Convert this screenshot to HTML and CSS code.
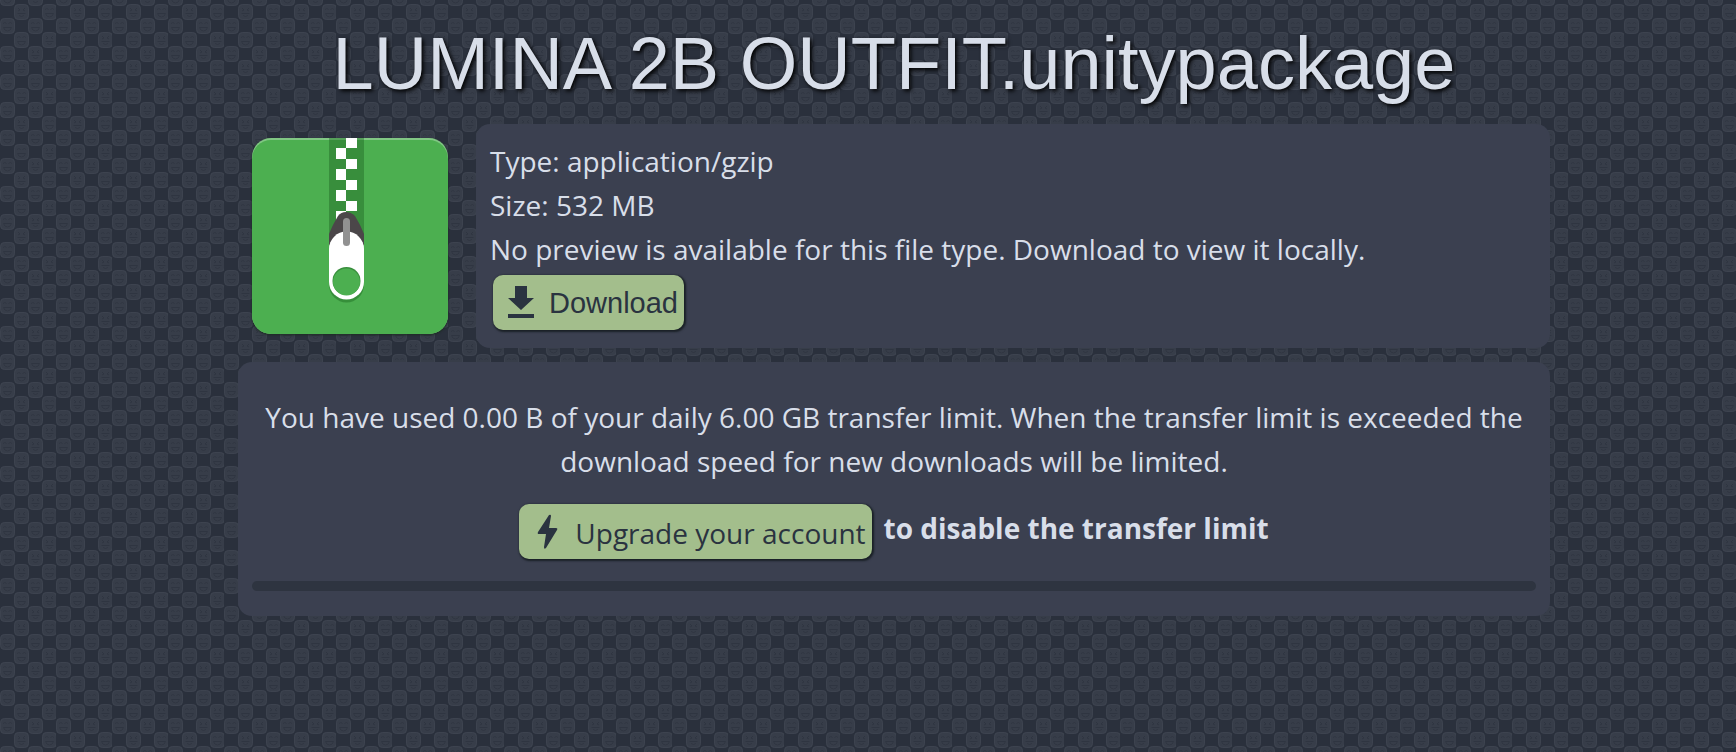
FILE: index.html
```html
<!DOCTYPE html>
<html lang="en">
<head>
<meta charset="utf-8">
<meta name="viewport" content="width=device-width, initial-scale=1">
<title>LUMINA 2B OUTFIT.unitypackage</title>
<link rel="stylesheet" href="styles.css">
</head>
<body>
<main class="page">
  <h1 class="title">LUMINA 2B OUTFIT.unitypackage</h1>
  <section class="file">
    <svg class="file-icon" viewBox="0 0 196 196" role="img" aria-label="Archive">
      <defs>
        <clipPath id="tile"><rect width="196" height="196" rx="19"/></clipPath>
      </defs>
      <g clip-path="url(#tile)">
        <rect width="196" height="196" fill="#81c784"/>
        <rect y="2" width="196" height="215" rx="19" fill="#4caf50"/>
        <rect x="77" width="35" height="104" fill="#388e3c"/>
        <rect x="77" width="35" height="2" fill="#56a05a"/>
        <path fill="#fff" d="M94 0h11v10H94zM84 10h10v11H84zM94 21h11v10H94zM84 31h10v11H84zM94 42h11v10H94zM84 52h10v11H84zM94 63h11v10H94zM84 73h10v11H84z"/>
      </g>
      <path fill="#4b4749" d="M77 107V96q4-10 9-18 3-4 8-4t9 4q5 8 9 18v11z"/>
      <path fill="#287a2c" opacity=".6" d="M77 113h35v34a17.500 17.500 0 0 1-35 0z"/>
      <path fill="#fff" d="M77 111a17.500 17.500 0 0 1 35 0v33a17.500 17.500 0 0 1-35 0z"/>
      <circle cx="94.500" cy="143" r="14" fill="#388e3c"/>
      <circle cx="94.500" cy="144" r="13.500" fill="#4caf50"/>
      <rect x="91" y="80" width="7" height="28" rx="3.500" fill="#919191"/>
    </svg>
    <div class="card details">
      <div>Type: application/gzip</div>
      <div>Size: 532 MB</div>
      <div>No preview is available for this file type. Download to view it locally.</div>
      <button class="button download" type="button">
        <svg class="icon" viewBox="0 0 36 36" aria-hidden="true"><path fill="currentColor" d="M12 1h12v12h7L18 25 5 13h7zM5 29h26v4H5z"/></svg>
        <span>Download</span>
      </button>
    </div>
  </section>
  <section class="card limit">
    <p class="usage">You have used 0.00 B of your daily 6.00 GB transfer limit. When the transfer limit is exceeded the download speed for new downloads will be limited.</p>
    <div class="upgrade">
      <a class="button" href="#upgrade">
        <svg class="icon" viewBox="0 0 36 36" aria-hidden="true"><path fill="currentColor" d="M20 1q2-1 2 1l-2 12h7q2 0 1 2L17 34q-2 2-2-1l2-13H10q-2 0-1-2z"/></svg>
        <span class="label">Upgrade your account</span>
      </a>
      <strong class="note">to disable the transfer limit</strong>
    </div>
    <div class="meter" role="progressbar" aria-label="Transfer used" aria-valuenow="0" aria-valuemin="0" aria-valuemax="100"></div>
  </section>
</main>
</body>
</html>
```
FILE: styles.css
```css
* {
  box-sizing: border-box;
}

body {
  margin: 0;
  min-height: 100vh;
  padding: 0 0 0 52px;
  color: #d8dee9;
  font: 28px/44px "Open Sans", "Noto Sans", sans-serif;
  background: #2a303c url("data:image/svg+xml,%3Csvg xmlns='http://www.w3.org/2000/svg' xmlns:xlink='http://www.w3.org/1999/xlink' width='56' height='56'%3E%3Cdefs%3E%3Cg id='f'%3E%3Crect x='.5' y='.5' width='14' height='15' rx='4' fill='%23373d49' stroke='%233d434f'/%3E%3Cpath d='M3 5.500q2-2 3.500 0M8.500 5.500q2-2 3.500 0M3.500 9.500h8q-1 3.500-4 3.500t-4-3.500z' fill='none' stroke='%232f3541'/%3E%3C/g%3E%3Cg id='g'%3E%3Crect x='.5' y='.5' width='14' height='15' rx='4' fill='%23373d49' stroke='%233d434f'/%3E%3Cpath d='M4 4l2 2-2 1M11 4l-2 2 2 1M3.500 9.500h8M5 11.500q2.500 2 5 0' fill='none' stroke='%232f3541'/%3E%3C/g%3E%3C/defs%3E%3Cuse xlink:href='%23g' x='14' y='4'/%3E%3Cuse xlink:href='%23f' x='42' y='4'/%3E%3Cuse xlink:href='%23f' y='18'/%3E%3Cuse xlink:href='%23f' x='28' y='18'/%3E%3Cuse xlink:href='%23f' x='14' y='32'/%3E%3Cuse xlink:href='%23g' x='42' y='32'/%3E%3Cuse xlink:href='%23f' y='46'/%3E%3Cuse xlink:href='%23f' y='-10'/%3E%3Cuse xlink:href='%23g' x='28' y='46'/%3E%3Cuse xlink:href='%23g' x='28' y='-10'/%3E%3C/svg%3E");
}

.page {
  max-width: 1312px;
  margin: 0 auto;
}

.title {
  margin: 0;
  padding: 20px 0 16px;
  color: #d8dee9;
  font: 74px/88px "Liberation Sans", Arial, sans-serif;
  text-align: center;
  text-shadow: 2px 2px 4px #000;
}

.file {
  display: flex;
  align-items: flex-start;
  gap: 28px;
  margin-bottom: 14px;
  padding-left: 14px;
}

.file-icon {
  flex: none;
  width: 196px;
  height: 196px;
  margin-top: 14px;
  overflow: visible;
  filter: drop-shadow(0 1px 1px #1c2a22);
}

.card {
  border-radius: 14px;
  background: #3b4050;
}

.details {
  flex: 1;
  padding: 15px 14px;
}

.button {
  display: inline-flex;
  align-items: center;
  gap: 10px;
  height: 55px;
  padding: 0 6px 0 10px;
  border: 0;
  border-radius: 10px;
  color: #2a3340;
  background: #a3be8c;
  box-shadow: 1px 1px 2px 1px #1a2026;
  font: inherit;
  text-decoration: none;
}

.download {
  display: flex;
  margin: 4px 3px 3px;
  font: 29px/44px "Liberation Sans", Arial, sans-serif;
}

.icon {
  flex: none;
  width: 36px;
  height: 36px;
}

.limit {
  padding: 33px 14px 25px;
  text-align: center;
}

.usage {
  margin: 0;
}

.upgrade {
  display: flex;
  justify-content: center;
  align-items: flex-start;
  gap: 12px;
  margin: 21px 0 22px;
}

.label {
  padding-top: 2px;
}

.note {
  padding-top: 2px;
}

.meter {
  height: 10px;
  border-radius: 5px;
  background: #2e3440;
}
```
